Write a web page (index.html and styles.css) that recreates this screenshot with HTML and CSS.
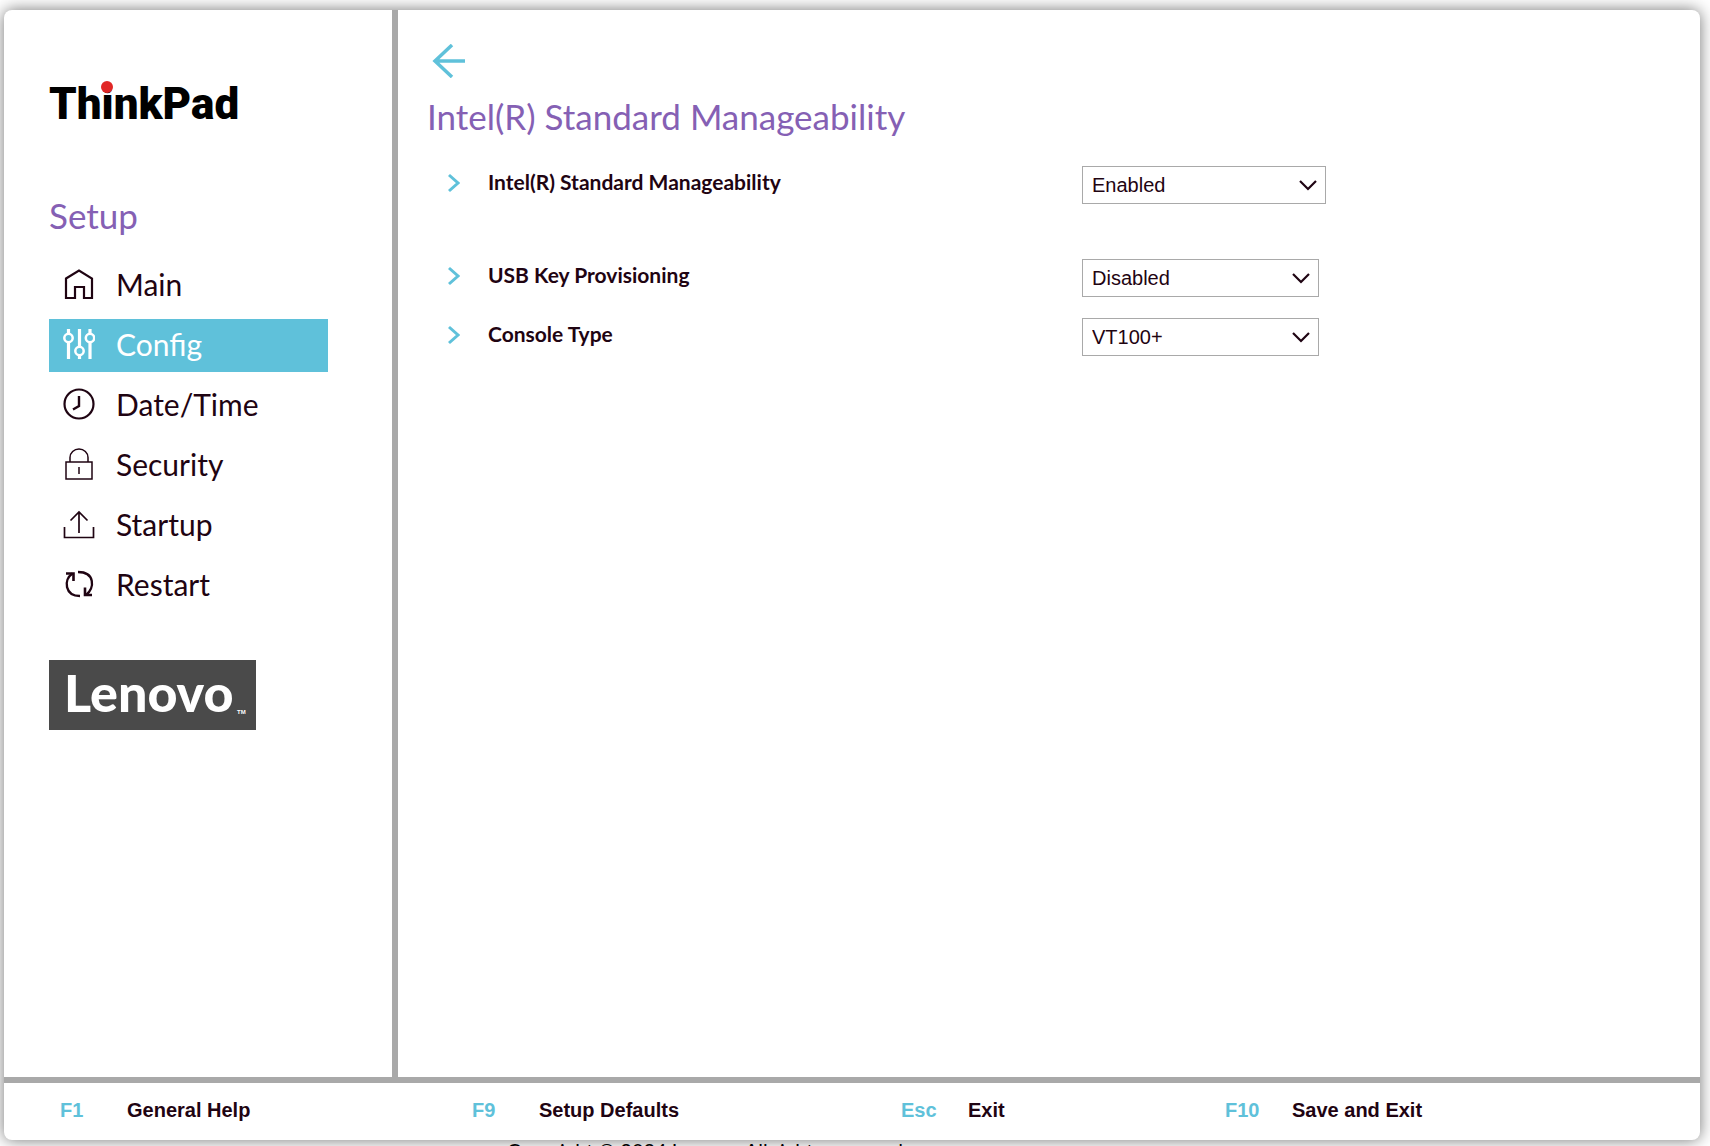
FILE: index.html
```html
<!DOCTYPE html>
<html lang="en">
<head>
<meta charset="utf-8">
<title>ThinkPad Setup</title>
<link rel="stylesheet" href="styles.css">
</head>
<body>
<div class="app">
  <div class="workspace">
    <aside class="sidebar">
      <svg class="thinkpad" viewBox="0 0 192 66" role="img" aria-label="ThinkPad">
        <text class="thinkpad-word" x="0" y="52">ThinkPad</text>
        <circle cx="58" cy="20" r="6" fill="#e12726"/>
      </svg>
      <h2 class="title">Setup</h2>
      <nav class="nav">
        <a class="nav-item" href="#main">
          <svg class="icon" viewBox="0 0 32 32"><path d="M3 10.500 16 2.500 29 10.500V30H21V19H12V30H3Z" stroke-width="2.200"/></svg>
          Main</a>
        <a class="nav-item active" href="#config" aria-current="page">
          <svg class="icon" viewBox="0 0 32 32"><g stroke-width="3.200"><path d="M5.500 1V6M5.500 14V31M16.500 1V19M16.500 27V31M27 1V6M27 14V31"/></g><g stroke-width="2.500"><circle cx="5.500" cy="10" r="4.200"/><circle cx="16.500" cy="23" r="4.200"/><circle cx="27" cy="10" r="4.200"/></g></svg>
          Config</a>
        <a class="nav-item" href="#datetime">
          <svg class="icon" viewBox="0 0 32 32"><circle cx="16" cy="16" r="14.500" stroke-width="2.200"/><path d="M16 8V18L10 21.500" stroke-width="2.400"/></svg>
          Date/Time</a>
        <a class="nav-item" href="#security">
          <svg class="icon" viewBox="0 0 32 32"><path d="M3 14H29V31H3ZM7 14V9.500A9 8.500 0 0 1 25 9.500V14M16 19V26" stroke-width="1.500"/></svg>
          Security</a>
        <a class="nav-item" href="#startup">
          <svg class="icon" viewBox="0 0 32 32"><path d="M1.500 19V29.500H30.500V19M16 25V4M7.500 12.500 16 4 24.500 12.500" stroke-width="1.700"/></svg>
          Startup</a>
        <a class="nav-item" href="#restart">
          <svg class="icon" viewBox="0 0 32 32"><path d="M15 4C32 4 32 20 23 27M17 28C2 28 0 12 9.500 5.500" stroke-width="2.400"/><path d="M3 5.500H10.500V13M29 27H22V19.500" stroke-width="2.600"/></svg>
          Restart</a>
      </nav>
      <svg class="lenovo" viewBox="0 0 207 70" role="img" aria-label="Lenovo">
        <rect width="207" height="70" fill="#4a4a4a"/>
        <text class="lenovo-word" x="15" y="52">Lenovo</text>
        <text class="lenovo-tm" x="188" y="54">TM</text>
      </svg>
    </aside>
    <main class="content">
      <button class="back" type="button" aria-label="Back">
        <svg class="back-icon" viewBox="0 0 34 34"><path d="M21 1 4 17 21 33M4 17H34" stroke-width="3.500"/></svg>
      </button>
      <h1 class="title">Intel(R) Standard Manageability</h1>
      <div class="settings">
        <div class="row section">
          <svg class="chevron" viewBox="0 0 14 20"><path d="M3 2 12 10 3 18" stroke-width="3"/></svg>
          <label class="label" for="manageability">Intel(R) Standard Manageability</label>
          <span class="field wide"><select id="manageability"><option>Enabled</option><option>Disabled</option></select>
          <svg class="caret" viewBox="0 0 20 12"><path d="M2 2 10 10 18 2" stroke-width="2.200"/></svg></span>
        </div>
        <div class="row">
          <svg class="chevron" viewBox="0 0 14 20"><path d="M3 2 12 10 3 18" stroke-width="3"/></svg>
          <label class="label" for="usb">USB Key Provisioning</label>
          <span class="field"><select id="usb"><option>Disabled</option><option>Enabled</option></select>
          <svg class="caret" viewBox="0 0 20 12"><path d="M2 2 10 10 18 2" stroke-width="2.200"/></svg></span>
        </div>
        <div class="row">
          <svg class="chevron" viewBox="0 0 14 20"><path d="M3 2 12 10 3 18" stroke-width="3"/></svg>
          <label class="label" for="console">Console Type</label>
          <span class="field"><select id="console"><option>VT100+</option></select>
          <svg class="caret" viewBox="0 0 20 12"><path d="M2 2 10 10 18 2" stroke-width="2.200"/></svg></span>
        </div>
      </div>
    </main>
  </div>
  <footer class="keys">
    <button class="key" type="button"><kbd>F1</kbd>General Help</button>
    <button class="key" type="button"><kbd>F9</kbd>Setup Defaults</button>
    <button class="key" type="button"><kbd>Esc</kbd>Exit</button>
    <button class="key" type="button"><kbd>F10</kbd>Save and Exit</button>
  </footer>
</div>
<p class="copyright">Copyright © 2024 Lenovo. All rights reserved.</p>
</body>
</html>
```
FILE: styles.css
```css
* { box-sizing: border-box; }
html { scrollbar-width: none; }
body {
  margin: 0;
  padding: 10px 10px 0 4px;
  background: #fff;
  color: #1f0412;
  font-family: Lato, sans-serif;
}
svg { display: block; flex: none; fill: none; stroke: currentColor; }
.app {
  display: flex;
  flex-direction: column;
  min-height: calc(100vh - 16px);
  background: #fff;
  border-radius: 8px;
  box-shadow: 0 0 16px rgba(0, 0, 0, .55);
}
.workspace { flex: 1; display: flex; }
.sidebar {
  width: 394px;
  padding: 57px 64px 0 45px;
  border-right: 6px solid #a9a9a9;
}
.thinkpad { width: 192px; height: 66px; stroke: none; overflow: visible; }
.thinkpad-word { font: 900 44px Roboto, sans-serif; fill: #000; }
.title {
  margin: 0;
  font-size: 35px;
  line-height: 44px;
  font-weight: 400;
  color: #8560b4;
}
.sidebar .title { margin-top: 60px; }
.nav { display: flex; flex-direction: column; gap: 7px; margin-top: 22px; }
.nav-item {
  display: flex;
  align-items: center;
  gap: 21px;
  height: 53px;
  padding: 0 0 3px 14px;
  font-size: 30px;
  color: inherit;
  text-decoration: none;
}
.nav-item.active { background: #5fc1da; color: #fff; }
.icon { width: 32px; height: 32px; }
.lenovo { width: 207px; height: 70px; margin-top: 48px; stroke: none; }
.lenovo-word { font: 900 52px Lato, sans-serif; fill: #fff; }
.lenovo-tm { font: bold 6px "Liberation Sans", sans-serif; fill: #fff; }

.content { flex: 1; padding: 34px 30px 34px 29px; }
.back { display: block; margin: 0 0 0 4px; padding: 0; border: 0; background: none; color: #5fc1da; }
.back-icon { width: 34px; height: 34px; }
.content .title { margin-top: 16px; }
.settings { display: flex; flex-direction: column; gap: 21px; margin-top: 28px; }
.row { display: grid; grid-template-columns: 42px 594px auto; justify-content: start; align-items: start; padding-left: 19px; }
.row.section { margin-bottom: 34px; }
.chevron { width: 14px; height: 20px; margin-top: 7px; color: #5fc1da; }
.label { font-size: 21px; line-height: 32px; font-weight: 700; }
.field { position: relative; width: 237px; }
.field.wide { width: 244px; }
.field select {
  appearance: none;
  display: block;
  width: 100%;
  height: 38px;
  padding: 0 40px 0 9px;
  border: 1px solid #a9a9a9;
  border-radius: 0;
  background: #fff;
  color: inherit;
  font: 20px "Liberation Sans", sans-serif;
}
.caret { position: absolute; right: 8px; top: 13px; width: 20px; height: 12px; pointer-events: none; }

.keys {
  display: grid;
  grid-template-columns: 412px 429px 324px auto;
  height: 63px;
  padding: 0 56px;
  border-top: 6px solid #a9a9a9;
}
.key {
  display: flex;
  align-items: center;
  padding: 0 0 2px;
  border: 0;
  background: none;
  color: inherit;
  font: bold 20px "Liberation Sans", sans-serif;
}
.key kbd { width: 67px; font: inherit; text-align: left; color: #5fc1da; }
.copyright { margin: 0; padding-left: 503px; font: 20px/20px Lato, sans-serif; color: #000; }
```
